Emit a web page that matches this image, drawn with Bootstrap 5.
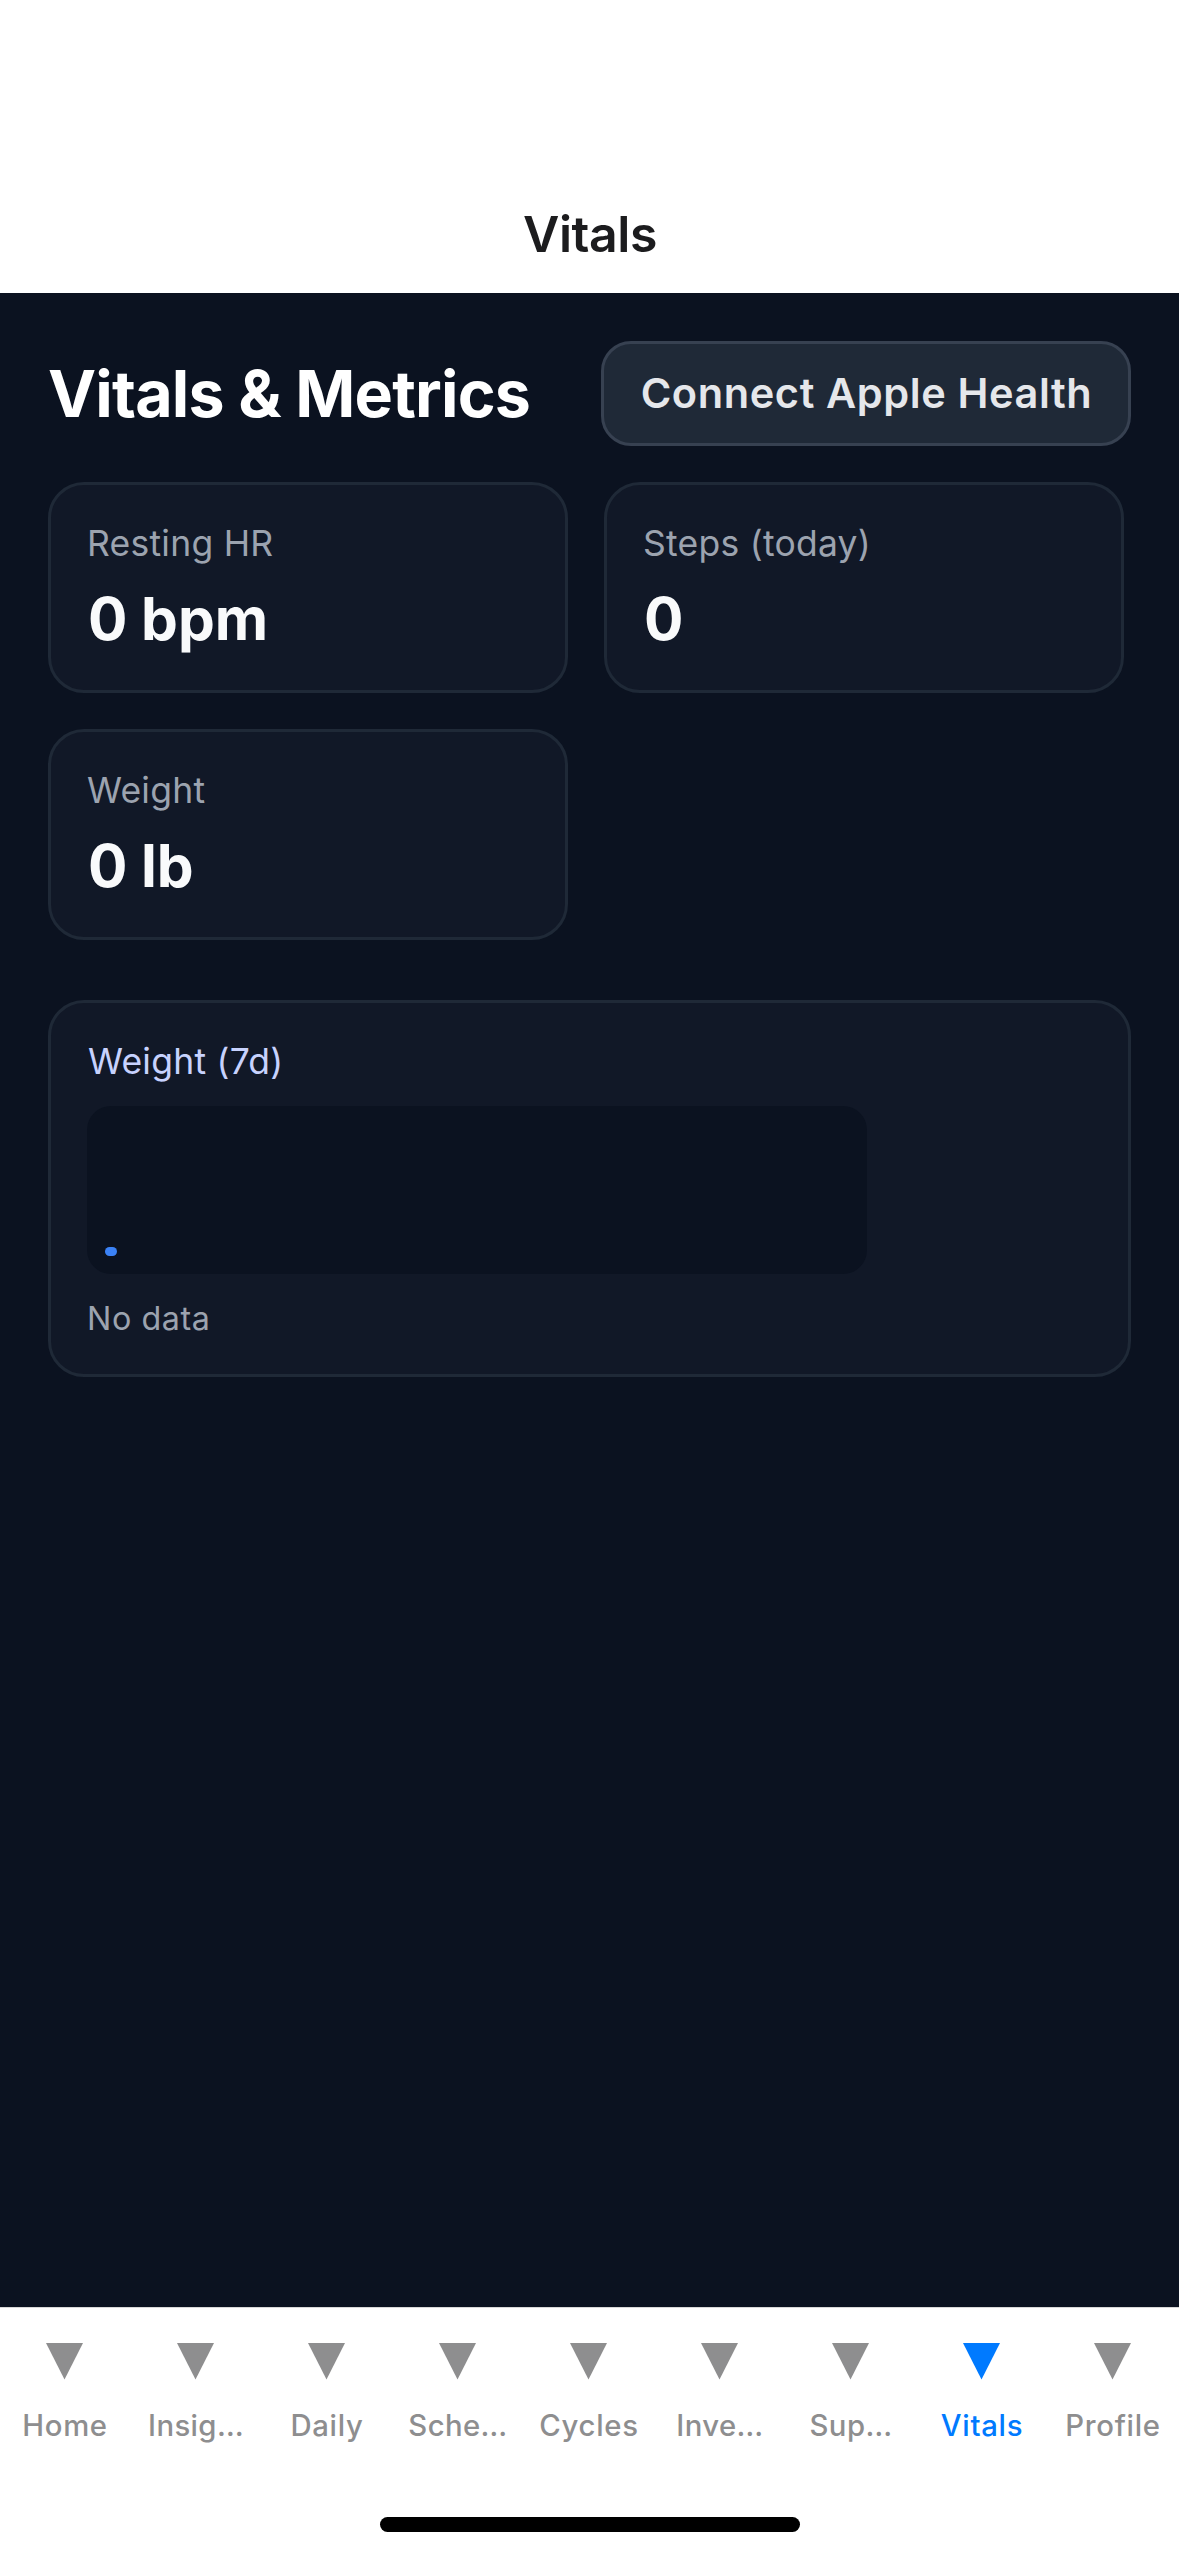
<!DOCTYPE html>
<html lang="en">
<head>
<meta charset="utf-8">
<meta name="viewport" content="width=device-width, initial-scale=1">
<title>Vitals</title>
<link rel="stylesheet" href="https://cdn.jsdelivr.net/npm/bootstrap@5.3.0/dist/css/bootstrap.min.css">
<style>
  body { font-family: Inter, "Liberation Sans", sans-serif; background: #fff; }
  .screen { height: 2556px; overflow: hidden; }
  .top-bar { height: 293px; padding-bottom: 29px; }
  .top-title { font-size: 50px; line-height: 60px; font-weight: 600; letter-spacing: -.45px; color: #1c1c1e; padding-left: 1px; }
  .vitals-main { background: #0b1220; padding: 48px; }
  .page-heading { font-size: 64.5px; line-height: 78px; font-weight: 700; letter-spacing: -.8px; color: #fff; }
  .btn-health {
    --bs-btn-color: #e5e7eb; --bs-btn-bg: #1f2937; --bs-btn-border-color: #374151;
    --bs-btn-hover-color: #fff; --bs-btn-hover-bg: #374151; --bs-btn-hover-border-color: #4b5563;
    width: 530px; height: 105px; padding: 0 0 2px 1px; border-width: 3px; border-radius: 30px;
    font-size: 41.5px; line-height: 50px; font-weight: 600; letter-spacing: .6px;
  }
  .metric-grid { gap: 36px; margin-top: 36px; }
  .panel { background: #111827; border: 3px solid #1f2937; border-radius: 36px; padding: 37px 36px 36px; }
  .metric { width: 520px; height: 211px; gap: 18px; }
  .metric-label, .chart-title { font-size: 35.5px; line-height: 44px; letter-spacing: .25px; color: #9ca3af; }
  .metric-value { font-size: 58.5px; line-height: 70px; font-weight: 700; letter-spacing: -.1px; color: #f9fafb; padding-left: 1px; }
  .chart-card { margin-top: 60px; }
  .chart-title { color: #c7d2fe; padding-left: 1px; }
  .spark { width: 780px; height: 168px; margin: 22px 0 25px; padding: 18px; border-radius: 24px; background: #0b1220; }
  .spark-point { width: 12px; height: 9px; border-radius: 4.5px; background: #3b82f6; }
  .chart-note { font-size: 32.3px; line-height: 40px; height: 39px; letter-spacing: .55px; color: #9ca3af; }
  .tab-bar { height: 249px; border-top: 1px solid #d8d8d8; padding-top: 35px; }
  .tab-item { width: 131px; gap: 28px; padding-right: 1px; color: #8e8e8f; text-decoration: none; font-size: 29.3px; line-height: 36px; font-weight: 500; letter-spacing: .7px; white-space: nowrap; }
  .tab-item.clipped { letter-spacing: .4px; }
  .tab-item.active { color: #007aff; }
  .tab-item svg { margin-right: 1px; }
  .home-line { width: 420px; height: 15px; margin-bottom: 24px; border-radius: 7.5px; background: #000; }
</style>
</head>
<body>
<div class="screen d-flex flex-column">
  <header class="top-bar bg-white d-flex align-items-end justify-content-center flex-shrink-0">
    <div class="top-title">Vitals</div>
  </header>

  <main class="vitals-main flex-grow-1">
    <div class="d-flex align-items-center justify-content-between">
      <h1 class="page-heading mb-0">Vitals &amp; Metrics</h1>
      <button type="button" class="btn btn-health">Connect Apple Health</button>
    </div>

    <section class="metric-grid d-flex flex-wrap">
      <div class="panel metric d-flex flex-column">
        <div class="metric-label">Resting HR</div>
        <div class="metric-value">0 bpm</div>
      </div>
      <div class="panel metric d-flex flex-column">
        <div class="metric-label">Steps (today)</div>
        <div class="metric-value">0</div>
      </div>
      <div class="panel metric d-flex flex-column">
        <div class="metric-label">Weight</div>
        <div class="metric-value">0 lb</div>
      </div>
    </section>

    <section class="panel chart-card">
      <div class="chart-title">Weight (7d)</div>
      <div class="spark d-flex align-items-end"><div class="spark-point"></div></div>
      <div class="chart-note">No data</div>
    </section>
  </main>

  <footer class="tab-bar bg-white d-flex flex-column align-items-center justify-content-between flex-shrink-0">
    <nav class="d-flex w-100">
      <a class="tab-item d-flex flex-column align-items-center" href="#"><svg width="37" height="37" viewBox="0 0 37 37" fill="currentColor"><path d="M0 0H37L18.5 36.6Z"/></svg><span>Home</span></a>
      <a class="tab-item clipped d-flex flex-column align-items-center" href="#"><svg width="37" height="37" viewBox="0 0 37 37" fill="currentColor"><path d="M0 0H37L18.5 36.6Z"/></svg><span>Insig…</span></a>
      <a class="tab-item d-flex flex-column align-items-center" href="#"><svg width="37" height="37" viewBox="0 0 37 37" fill="currentColor"><path d="M0 0H37L18.5 36.6Z"/></svg><span>Daily</span></a>
      <a class="tab-item clipped d-flex flex-column align-items-center" href="#"><svg width="37" height="37" viewBox="0 0 37 37" fill="currentColor"><path d="M0 0H37L18.5 36.6Z"/></svg><span>Sche…</span></a>
      <a class="tab-item d-flex flex-column align-items-center" href="#"><svg width="37" height="37" viewBox="0 0 37 37" fill="currentColor"><path d="M0 0H37L18.5 36.6Z"/></svg><span>Cycles</span></a>
      <a class="tab-item clipped d-flex flex-column align-items-center" href="#"><svg width="37" height="37" viewBox="0 0 37 37" fill="currentColor"><path d="M0 0H37L18.5 36.6Z"/></svg><span>Inve…</span></a>
      <a class="tab-item clipped d-flex flex-column align-items-center" href="#"><svg width="37" height="37" viewBox="0 0 37 37" fill="currentColor"><path d="M0 0H37L18.5 36.6Z"/></svg><span>Sup…</span></a>
      <a class="tab-item active d-flex flex-column align-items-center" href="#" aria-current="page"><svg width="37" height="37" viewBox="0 0 37 37" fill="currentColor"><path d="M0 0H37L18.5 36.6Z"/></svg><span>Vitals</span></a>
      <a class="tab-item d-flex flex-column align-items-center" href="#"><svg width="37" height="37" viewBox="0 0 37 37" fill="currentColor"><path d="M0 0H37L18.5 36.6Z"/></svg><span>Profile</span></a>
    </nav>
    <div class="home-line"></div>
  </footer>
</div>
<script src="https://cdn.jsdelivr.net/npm/bootstrap@5.3.0/dist/js/bootstrap.bundle.min.js"></script>
</body>
</html>
